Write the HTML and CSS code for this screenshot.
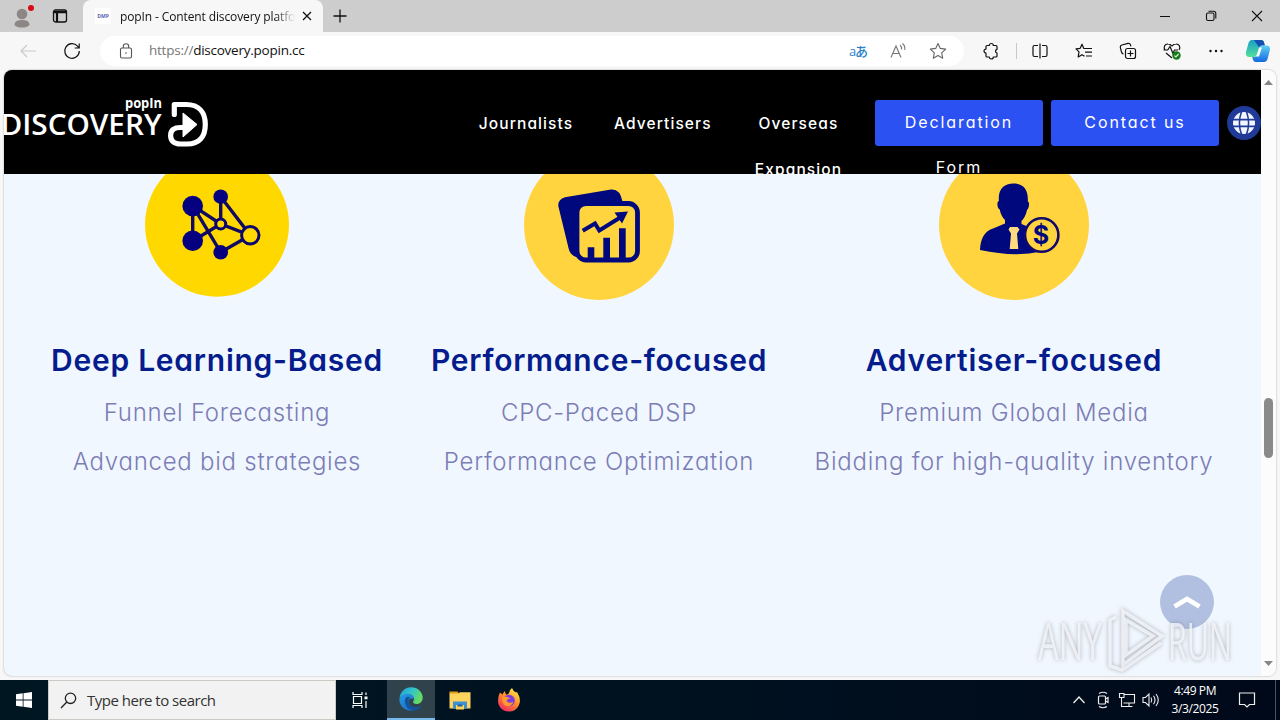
FILE: index.html
```html
<!DOCTYPE html>
<html lang="en">
<head>
  <meta charset="UTF-8">
  <meta name="viewport" content="width=device-width, initial-scale=1.0">
  <title>popIn - Content discovery platform</title>
  <link rel="stylesheet" href="styles.css">
</head>
<body>

<!-- Tabs -->
<div class="tab-bar">
  <div class="tab-tools">
    <svg class="profile" width="28" height="28" viewBox="0 0 28 28">
      <circle cx="14" cy="11" r="5.3" fill="#8c8785"/>
      <path d="M6.500 22c0-4 3.500-5 7.500-5s7.500 1 7.500 5c-2 2-4.500 2.500-7.500 2.500s-6-.5-7.500-2.500z" fill="#8c8785"/>
      <circle cx="23" cy="5" r="3" fill="#d60c12"/>
    </svg>
    <svg width="16" height="16" viewBox="0 0 16 16" fill="none" stroke="#111" stroke-width="1.300">
      <rect x="1.500" y="2" width="13" height="12" rx="2"/>
      <path d="M2 4.200h12M5 4v10" stroke-width="2.200"/>
    </svg>
  </div>
  <div class="tab">
    <span class="favicon">DMP</span>
    <span class="tab-title">popIn - Content discovery platform</span>
    <svg width="10" height="10" viewBox="0 0 10 10" stroke="#111" stroke-width="1.300"><path d="M1 1l8 8M9 1l-8 8"/></svg>
  </div>
  <svg class="new-tab" width="14" height="14" viewBox="0 0 14 14" stroke="#111" stroke-width="1.300"><path d="M7 .5v13M.5 7h13"/></svg>
  <div class="window-buttons">
    <svg width="12" height="12" viewBox="0 0 12 12" stroke="#111"><path d="M1 6.500h10"/></svg>
    <svg width="12" height="12" viewBox="0 0 12 12" fill="none" stroke="#111" stroke-width="1.100"><rect x="1.500" y="3" width="7.500" height="7.500" rx="1.500"/><path d="M3.500 1.300h5q2.300 0 2.300 2.300v5"/></svg>
    <svg width="12" height="12" viewBox="0 0 12 12" stroke="#111" stroke-width="1.100"><path d="M1 1l10 10M11 1L1 11"/></svg>
  </div>
</div>

<!-- Address bar -->
<div class="toolbar">
  <div class="tool back">
    <svg width="16" height="14" viewBox="0 0 16 14" fill="none" stroke="#c9c9c9" stroke-width="1.200"><path d="M16 7H1M7 1L1 7l6 6"/></svg>
  </div>
  <div class="tool refresh">
    <svg width="18" height="18" viewBox="0 0 18 18" fill="none" stroke="#111" stroke-width="1.200"><path d="M16.300 9A7.300 7.300 0 1 1 14.500 4.200L16 5.800M16.200 1.500v4.500h-4.500"/></svg>
  </div>
  <div class="address">
    <svg width="14" height="16" viewBox="0 0 14 16" fill="none" stroke="#555" stroke-width="1.100"><rect x="1.500" y="5" width="11" height="10" rx="1.500"/><path d="M4.300 5V3.500a2.700 2.700 0 0 1 5.400 0V5"/><circle cx="7" cy="10" r=".8" fill="#555" stroke="none"/></svg>
    <span class="url"><span class="scheme">https://</span>discovery.popin.cc</span>
    <span class="address-tool translate">aあ</span>
    <span class="address-tool">
      <svg width="18" height="18" viewBox="0 0 18 18" fill="none" stroke="#777" stroke-width="1.100"><path d="M2 15.500L7 4l5 11.500M3.800 11.500h6.400M11 3q2 1.500 1.500 4.500M13.500 1.500q3 2.500 2.200 6.500"/></svg>
    </span>
    <span class="address-tool">
      <svg width="18" height="18" viewBox="0 0 18 18" fill="none" stroke="#666" stroke-width="1.100" stroke-linejoin="round"><path d="M9 1.500l2.300 4.900 5.400.7-4 3.700 1 5.400L9 13.600l-4.700 2.600 1-5.400-4-3.700 5.400-.7z"/></svg>
    </span>
  </div>
  <div class="tool extensions">
    <svg width="18" height="18" viewBox="0 0 18 18" fill="none" stroke="#111" stroke-width="1.200" stroke-linejoin="round"><path d="M5 3.500h2.300a2 2 0 0 1 4 0H14q1 0 1 1V7.300a1.900 1.900 0 0 0 0 3.700v3q0 1-1 1h-2.700a2 2 0 0 1-4 0H5q-1 0-1-1v-2.900a2 2 0 0 1 0-4V4.500q0-1 1-1z"/></svg>
  </div>
  <div class="divider"></div>
  <div class="tool">
    <svg width="18" height="18" viewBox="0 0 18 18" fill="none" stroke="#111" stroke-width="1.200"><path d="M7 3.500H3.500q-1.500 0-1.500 1.500v8q0 1.500 1.500 1.500H7M11 3.500h3.500q1.500 0 1.500 1.500v8q0 1.500-1.500 1.500H11M9 1.500v15"/></svg>
  </div>
  <div class="tool">
    <svg width="18" height="18" viewBox="0 0 18 18" fill="none" stroke="#111" stroke-width="1.200" stroke-linejoin="round"><path d="M11 6.500H8.800L7 2.200 5.200 6.300l-4.200.6 3 3-.8 5 3.800-2.200 2.500 1.500M11 6.500h6M10 10.200h7M11 14h6"/></svg>
  </div>
  <div class="tool">
    <svg width="18" height="18" viewBox="0 0 18 18" fill="none" stroke="#111" stroke-width="1.200"><rect x="6.500" y="6.500" width="10" height="10" rx="2"/><path d="M11.500 8.500v6M8.500 11.500h6M4.500 12q-1.500-.3-2-2L1.300 5.500Q1 3.500 2.800 3L9 1.400q1.800-.4 2.400 1.200l.5 1.700"/></svg>
  </div>
  <div class="tool">
    <svg width="20" height="20" viewBox="0 0 20 20" fill="none" stroke="#111" stroke-width="1.200"><path d="M3 9C1 6 3 2.800 6 3q2.500 0 4 2 1.500-2 4-2c3-.2 5 3 3 6M1.500 9h4.200L8 5.500l3 7L12.500 9H16M4 12l6 5"/><circle cx="14.500" cy="14.500" r="4.200" fill="#167c19" stroke="none"/><path d="M12.500 14.600l1.400 1.400 2.700-3" stroke="#d9eed9"/></svg>
  </div>
  <div class="tool">
    <svg width="16" height="4" viewBox="0 0 16 4" fill="#111"><circle cx="2.500" cy="2" r="1.200"/><circle cx="8" cy="2" r="1.200"/><circle cx="13.500" cy="2" r="1.200"/></svg>
  </div>
  <div class="tool copilot">
    <svg width="26" height="24" viewBox="0 0 26 24">
      <defs>
        <linearGradient id="cp1" x1="0" y1="0" x2="0" y2="1"><stop offset="0" stop-color="#1a9fc8"/><stop offset="1" stop-color="#53df9c"/></linearGradient>
        <linearGradient id="cp2" x1="0" y1="0" x2="0" y2="1"><stop offset="0" stop-color="#5fd0f5"/><stop offset="1" stop-color="#1568df"/></linearGradient>
      </defs>
      <path d="M7 1h9q2.500 0 3.200 3l.6 2.500h-3q-2 0-2.600 2L12.300 15q-.8 3-3.600 3H4.500Q0 18 1 13L3.500 4Q4.500 1 7 1z" fill="url(#cp1)"/>
      <path d="M9 1h7q2.500 0 3.200 3l.6 2.500h-3q-2 0-2.600 2z" fill="#174fb1"/>
      <path d="M17.500 6.500h3.800q4.500 0 3.500 5L22.500 20q-.9 3-3.500 3h-8q-2.500 0-3.200-3l-.6-2h2.500q2 0 2.600-2l2-7.500q.6-2 3.200-2z" fill="url(#cp2)"/>
      <path d="M14.200 8.500h2.800l-3 9h-2.800z" fill="#f4fafe"/>
    </svg>
  </div>
</div>

<!-- Web page -->
<div class="viewport">
  <div class="page">
    <header class="header">
      <svg class="logo" width="210" height="64" viewBox="4 90 210 64">
        <text class="logo-small" x="125" y="107.500" textLength="37" lengthAdjust="spacingAndGlyphs">popIn</text>
        <text class="logo-name" x="0.500" y="134.500" textLength="161" lengthAdjust="spacingAndGlyphs">DISCOVERY</text>
        <path d="M174.300 114.500v-10h12c12.500 0 19 8 19 20s-6 19.500-18 19.500h-7c-6 0-9.700-3-9.700-8.500s4-8 9.700-8h5" fill="none" stroke="#fff" stroke-width="5.200" stroke-linecap="round" stroke-linejoin="round"/>
        <path d="M183 113l14 11.500-14 12.500z" fill="#fff" stroke="#fff" stroke-linejoin="round"/>
      </svg>
      <nav class="nav">
        <a class="nav-item">Journalists</a>
        <a class="nav-item">Advertisers</a>
        <a class="nav-item">Overseas Expansion</a>
      </nav>
      <a class="nav-button">Declaration Form</a>
      <a class="nav-button contact">Contact us</a>
      <div class="language">
        <svg width="22" height="22" viewBox="0 0 24 24"><circle cx="12" cy="12" r="12" fill="#f3f6ff"/><path d="M0 8.300h24M0 15.700h24M9.500-1Q4.500 12 9.500 25M14.500-1q5 13 0 26" fill="none" stroke="#1f3b97" stroke-width="1.700"/></svg>
      </div>
    </header>

    <section class="features">
      <div class="feature">
        <svg class="feature-icon" width="150" height="150" viewBox="0 0 150 150">
          <circle cx="75" cy="74.700" r="72" fill="#ffd800"/>
          <g fill="none" stroke="#100a62" stroke-width="3.400">
            <path d="M50.700 55.700V91l28-17zM50.700 55.700l28 46.600 29.600-17-29.600-11.300M78.700 46.700V74M78.700 46.700l29.600 38.600"/>
          </g>
          <g fill="#04007f">
            <circle cx="50.700" cy="56" r="10.300"/><circle cx="50.700" cy="90.700" r="10.300"/>
            <circle cx="78.700" cy="46.700" r="7.300"/><circle cx="78.700" cy="102.300" r="7.300"/>
          </g>
          <g fill="#ffd800" stroke="#0a0671" stroke-width="3">
            <circle cx="78.700" cy="74" r="5"/><circle cx="108.300" cy="85.300" r="8.700"/>
          </g>
        </svg>
        <h2>Deep Learning-Based</h2>
        <p>Funnel Forecasting</p>
        <p>Advanced bid strategies</p>
      </div>
      <div class="feature">
        <svg class="feature-icon" width="150" height="150" viewBox="0 0 150 150">
          <circle cx="75" cy="75" r="75" fill="#ffd43e"/>
          <path d="M34.300 56Q34 49 41 47.200L87 39.500q9-1 11.500 12V60H60v47h-8q-6-2-7.500-9z" fill="#00087d"/>
          <rect x="53" y="53.500" width="60.500" height="56.500" rx="9" fill="#ffd43e" stroke="#00087d" stroke-width="4.800"/>
          <path d="M63.700 97.300h6.600V110h-6.600zM79.300 87.700H86V110h-6.700zM95 78.300h6.700V110H95z" fill="#00087d"/>
          <path d="M58.700 80.700L71 73.500l4.300 7L97 67" fill="none" stroke="#00087d" stroke-width="4"/>
          <path d="M104 61.500l-13.500 1 7.500 11z" fill="#00087d"/>
        </svg>
        <h2>Performance-focused</h2>
        <p>CPC-Paced DSP</p>
        <p>Performance Optimization</p>
      </div>
      <div class="feature">
        <svg class="feature-icon" width="150" height="150" viewBox="0 0 150 150">
          <circle cx="75" cy="75" r="75" fill="#ffd43e"/>
          <path d="M74.500 33.500c10 0 15 6 14.300 18 2 0 1.500 7-.8 8.500-1 5-3 8.500-5.500 11v3l12 5 8 22.500q-27 6-61.500-1.500c.500-11 4-18.500 13-21.500l12-5v-3.500c-2.500-2.500-4.500-6-5.300-10.500-2.600-1-3.200-8-.8-8.500-1-11.500 4.600-17.500 14.600-17.500z" fill="#00087d"/>
          <path d="M71 77h7.500l2 2.500-2.500 4 1.300 15.500h-8.600L72 83.500l-2.500-4z" fill="#ffd980"/>
          <circle cx="102.700" cy="85" r="16.700" fill="#ffd43e" stroke="#11096b" stroke-width="2.600"/>
          <text class="dollar" x="102" y="94" text-anchor="middle">$</text>
        </svg>
        <h2>Advertiser-focused</h2>
        <p>Premium Global Media</p>
        <p>Bidding for high-quality inventory</p>
      </div>
    </section>

    <div class="to-top">
      <svg width="28" height="14" viewBox="0 0 28 14" fill="none" stroke="#fff" stroke-width="4.800"><path d="M1.500 11.500L14 4l12.500 7.500"/></svg>
    </div>
  </div>
  <div class="scrollbar">
    <svg width="9" height="5" viewBox="0 0 9 5"><path d="M0 5l4.500-5L9 5z" fill="#858585"/></svg>
    <div class="thumb"></div>
    <svg width="9" height="5" viewBox="0 0 9 5"><path d="M0 0h9L4.500 5z" fill="#858585"/></svg>
  </div>
</div>

<!-- Watermark over the page -->
<svg class="watermark" width="204" height="72" viewBox="1034 605 204 72">
  <g class="mark-text">
    <text x="1038" y="660" textLength="64" lengthAdjust="spacingAndGlyphs">ANY</text>
    <text x="1168" y="660" textLength="64" lengthAdjust="spacingAndGlyphs">RUN</text>
  </g>
  <g class="mark-shape">
    <path d="M1123 611l39 25-39 29z"/>
    <path d="M1126 620l27 16-27 19z"/>
    <path d="M1116 617l-6 3v46l12 4 39-27"/>
  </g>
</svg>

<!-- Taskbar -->
<div class="taskbar">
  <div class="task start">
    <svg width="16" height="16" viewBox="0 0 16 16" fill="#fff"><path d="M0 2.300L6.700 1.300v6.300H0zM7.500 1.200L16 0v7.600H7.500zM0 8.400h6.700v6.300L0 13.700zM7.500 8.400H16V16l-8.500-1.200z"/></svg>
  </div>
  <div class="search">
    <svg width="17" height="17" viewBox="0 0 17 17" fill="none" stroke="#222" stroke-width="1.300"><circle cx="10.500" cy="6.300" r="5.200"/><path d="M6.800 10L1 16"/></svg>
    <span>Type here to search</span>
  </div>
  <div class="task task-view">
    <svg width="18" height="18" viewBox="0 0 18 18" fill="none" stroke="#fff" stroke-width="1.200"><path d="M2 1v2.500h9V1M2 17v-2.500h9V17M2.500 5.500h8v7h-8zM15 1.500v2.500M15 10v7"/><path d="M13.500 5.500h3v2.800h-3z" fill="#fff" stroke="none"/></svg>
  </div>
  <div class="task active">
    <svg width="24" height="24" viewBox="0 0 24 24">
      <defs>
        <linearGradient id="edge1" x1="0" y1="0" x2="1" y2=".4"><stop offset="0" stop-color="#219ddd"/><stop offset=".55" stop-color="#32c5c8"/><stop offset="1" stop-color="#65dc61"/></linearGradient>
        <linearGradient id="edge2" x1="0" y1="0" x2="1" y2="1"><stop offset="0" stop-color="#249ce4"/><stop offset="1" stop-color="#1562b5"/></linearGradient>
      </defs>
      <path d="M.5 11C1.500 4.500 6 .3 12 .3c7 0 11.700 5 11.700 10.200 0 4-2.700 6.500-6 6.500-2.700 0-4.200-1.200-3.500-2.500 2.500-3-.2-7-4.200-7-4.500 0-8.500 2-9.500 3.500z" fill="url(#edge1)"/>
      <path d="M.4 11.500C2 8 6 6.500 10 7c3.500.4 5.500 3 4.700 5.500-1.200-1.500-3.500-1.500-4.500.5-1.500 3.500 1.800 7.300 6.300 7.300 2.500 0 4-.5 5.700-1.500C20 22 16.500 23.700 12.500 23.700 5 23.700 0 18.500.4 11.500z" fill="url(#edge2)"/>
      <path d="M7 10.500c-3 4 0 12.500 7.500 13 3-.3 6-2 7.700-4.700-4 2.500-10 1.500-12-2.300-1.200-2.500-.5-5 1-6-1.300-.8-3-.9-4.200 0z" fill="#14529b"/>
    </svg>
  </div>
  <div class="task folder">
    <svg width="22" height="20" viewBox="0 0 22 20"><path d="M.5 1.500h8l2 2.500H.5z" fill="#e69b17"/><path d="M.5 3.500h9l1.500-1.200h10.500V18.500H.5z" fill="#fed45e"/><path d="M4 11.500h14v7H4z" fill="#3c91d5"/><path d="M7 15h8v4.500H7z" fill="#fed45e"/><path d="M8.500 14.500h5v2h-5z" fill="#225d94"/></svg>
  </div>
  <div class="task firefox">
    <svg width="24" height="24" viewBox="0 0 24 24">
      <defs><linearGradient id="fox" x1=".8" y1="0" x2=".2" y2="1"><stop offset="0" stop-color="#fff14a"/><stop offset=".45" stop-color="#ff9128"/><stop offset="1" stop-color="#f32267"/></linearGradient></defs>
      <path d="M3 4.500l2.500 2L7.500 3l1.500 3.500q2 .3 3-1.500.3-3 3-5 1 3 4 4.500L20 4q5 8 1.500 14-3 5.500-9.500 5.500C5 23.500 1 18.500 1 12.500q0-4.500 2-8z" fill="url(#fox)"/>
      <circle cx="12" cy="12.500" r="5.800" fill="#7b3de0"/>
      <path d="M5 9q4-1.500 8.500 1.500-3.500 0-4 2.500 2 3 7 1-2.500 5-7 4Q5 17 5 9z" fill="#ff9a2b"/>
    </svg>
  </div>
  <div class="tray">
    <svg width="24" height="18" viewBox="0 0 24 18" fill="none" stroke="#eee" stroke-width="1.300"><path d="M6.500 12l5.500-6 5.500 6"/></svg>
    <svg width="24" height="18" viewBox="0 0 24 18" fill="none" stroke="#eee" stroke-width="1.200"><rect x="7.500" y="5" width="7" height="8" rx="1"/><path d="M14.500 8l2.500-1.500v5L14.500 10M8 2.500q4-2.500 8 0M8 15.500q4 2.500 8 0"/></svg>
    <svg width="24" height="18" viewBox="0 0 24 18" fill="none" stroke="#eee" stroke-width="1.100"><path d="M9 3.500h10.500v8.500H8.500M14 12v3.500M9.500 15.500h8M4.500 2.500h4.500v4h-4.500zM6.500 6.500v9h3"/></svg>
    <svg width="24" height="18" viewBox="0 0 24 18" fill="none" stroke="#eee" stroke-width="1.100"><path d="M4 6.500h2.500L10 3v12l-3.500-3.500H4zM12 6.500q1.500 2.500 0 5M14.500 4.700q3 4.300 0 8.600M17 3q4.500 6 0 12"/></svg>
    <div class="clock">
      <span>4:49 PM</span>
      <span>3/3/2025</span>
    </div>
    <svg class="notifications" width="18" height="18" viewBox="0 0 18 18" fill="none" stroke="#eee" stroke-width="1.200"><path d="M1.500 2h15v11.500h-5L9 16l-2.500-2.500h-5z"/></svg>
  </div>
</div>

</body>
</html>
```
FILE: styles.css
```css
* {
  box-sizing: border-box;
}
body {
  display: flex;
  flex-direction: column;
  width: 1280px;
  height: 720px;
  margin: 0;
  overflow: hidden;
  background-color: #f7f7f7;
  font-family: "Open Sans", "Noto Sans", sans-serif;
  color: #111;
}
svg {
  flex-shrink: 0;
}

/* Tabs */
.tab-bar {
  display: flex;
  align-items: center;
  height: 32px;
  background-color: #cdcdcd;
}
.tab-tools {
  display: flex;
  align-items: center;
  gap: 16px;
  width: 83px;
  padding-left: 8px;
}
.profile {
  margin-top: 2px;
}
.tab {
  display: flex;
  align-items: center;
  width: 240px;
  height: 32px;
  padding: 0 10px 0 12px;
  background-color: #f7f7f7;
  border-radius: 8px 8px 0 0;
}
.favicon {
  width: 16px;
  height: 16px;
  background-color: #fff;
  color: #5a62b0;
  font-size: 5px;
  font-weight: bold;
  line-height: 16px;
  text-align: center;
}
.tab-title {
  width: 175px;
  margin: 0 7px 0 9px;
  overflow: hidden;
  white-space: nowrap;
  font-size: 12px;
  letter-spacing: -0.120px;
  -webkit-mask-image: linear-gradient(to right, #000 155px, transparent 175px);
  mask-image: linear-gradient(to right, #000 155px, transparent 175px);
}
.new-tab {
  margin-left: 10px;
}
.window-buttons {
  display: flex;
  gap: 34px;
  margin-left: auto;
  padding-right: 17px;
}

/* Address bar */
.toolbar {
  display: flex;
  align-items: center;
  height: 38px;
}
.tool {
  display: flex;
  align-items: center;
  justify-content: center;
  width: 44px;
}
.back {
  width: 56px;
}
.refresh {
  width: 32px;
}
.address {
  display: flex;
  align-items: center;
  width: 864px;
  height: 30px;
  margin-left: 12px;
  padding: 0 6px 0 19px;
  background-color: #fff;
  border-radius: 15px;
}
.url {
  margin-right: auto;
  padding: 0 0 2px 16px;
  font-size: 13.500px;
  letter-spacing: -0.240px;
}
.scheme {
  color: #767676;
}
.address-tool {
  display: flex;
  justify-content: center;
  width: 40px;
}
.translate {
  color: #2b7fc7;
  font-family: "Open Sans", "Noto Sans CJK JP", sans-serif;
  font-size: 13px;
  font-weight: 500;
  line-height: 18px;
  letter-spacing: -1px;
}
.extensions {
  width: 52px;
  padding-left: 2px;
}
.divider {
  width: 1px;
  height: 16px;
  background-color: #c8c8c8;
  margin-right: 1px;
}
.copilot {
  width: 40px;
}

/* Page frame */
.viewport {
  display: flex;
  height: 606px;
  margin: 0 4px 4px;
  overflow: hidden;
  border-radius: 8px;
  background-color: #f1f7ff;
  box-shadow: 0 0 2px rgba(0, 0, 0, 0.35);
}
.page {
  position: relative;
  width: 1257px;
  font-family: Inter, "Open Sans", sans-serif;
  font-feature-settings: "cv11";
}
.header {
  position: relative;
  z-index: 1;
  display: flex;
  align-items: flex-start;
  height: 104px;
  padding-top: 30px;
  overflow: hidden;
  background-color: #000;
  color: #fff;
  font-size: 16px;
  line-height: 46px;
  text-align: center;
}
.logo {
  margin-top: -10px;
}
.logo text {
  fill: #fff;
  font-family: "Open Sans", sans-serif;
}
.logo-name {
  font-size: 29px;
  font-weight: 600;
}
.logo-small {
  font-size: 14px;
  font-weight: 700;
}
.nav {
  display: flex;
  margin-left: 244px;
}
.nav-item {
  width: 136px;
  padding: 1px 20px 0;
  font-size: 15.500px;
  font-weight: 500;
  letter-spacing: 1.100px;
}
.nav-item:last-child {
  padding: 1px 0 0 1px;
  width: 136px;
  word-spacing: 60px;
}
.nav-button {
  width: 168px;
  height: 46px;
  margin-left: 9px;
  padding: 0 24px;
  background-color: #2b51f2;
  border-radius: 3px;
  line-height: 45px;
  letter-spacing: 1.900px;
}
.contact {
  margin-left: 8px;
}
.language {
  display: flex;
  align-items: center;
  justify-content: center;
  width: 34px;
  height: 34px;
  margin: 6px 0 0 8px;
  background-color: #1f3b97;
  border-radius: 50%;
}

/* Features */
.features {
  display: grid;
  grid-template-columns: 426px 338px 492px;
  margin-top: -24px;
}
.feature {
  text-align: center;
  white-space: nowrap;
}
.feature-icon {
  display: block;
  margin: 0 auto;
}
.feature h2 {
  margin: 38px 0 5px;
  color: #041c8c;
  font-size: 30px;
  font-weight: 600;
  line-height: 45px;
  letter-spacing: 0.750px;
}
.feature p {
  margin: 0;
  color: #7b7db5;
  font-size: 24px;
  font-weight: 300;
  line-height: 49px;
  letter-spacing: 0.750px;
}
.dollar {
  fill: #00087d;
  font-size: 25px;
  font-weight: 700;
}
.to-top {
  position: absolute;
  right: 47px;
  bottom: 47px;
  display: flex;
  align-items: center;
  justify-content: center;
  width: 54px;
  height: 54px;
  background-color: #b1c0e1;
  border-radius: 50%;
}

/* Scrollbar */
.scrollbar {
  display: flex;
  flex-direction: column;
  align-items: center;
  width: 15px;
  padding: 10px 0;
  background-color: #fcfcfc;
}
.thumb {
  width: 9px;
  height: 60px;
  margin: 313px 0 auto;
  background-color: #8a8a8a;
  border-radius: 5px;
}

/* Watermark */
.watermark {
  position: absolute;
  left: 1034px;
  top: 605px;
  z-index: 2;
  filter: drop-shadow(0 0 2px rgba(100, 100, 110, 0.6));
}
.mark-text {
  fill: rgba(245, 247, 252, 0.8);
  font-family: "Open Sans", sans-serif;
  font-size: 51px;
  font-weight: 500;
}
.mark-shape {
  fill: none;
  stroke: rgba(245, 247, 252, 0.8);
  stroke-width: 3.500px;
}

/* Taskbar */
.taskbar {
  display: flex;
  height: 40px;
  background: linear-gradient(to right, #001722, #00101f 60%, #000919);
}
.task {
  display: flex;
  align-items: center;
  justify-content: center;
  width: 48px;
}
.search {
  display: flex;
  align-items: center;
  gap: 10px;
  width: 288px;
  padding-left: 11px;
  background-color: #f2f2f2;
  border: 1px solid #c9cbc5;
  color: #333;
  font-size: 15px;
  letter-spacing: -0.500px;
}
.task-view {
  width: 51px;
  padding-right: 3px;
}
.active {
  background-color: #30434d;
  border-bottom: 2px solid #76b9ed;
}
.folder {
  margin-left: 1px;
}
.firefox {
  margin-left: 1px;
}
.tray {
  display: flex;
  align-items: center;
  width: 209px;
  margin: 0 4px 0 auto;
  border-right: 1px solid #4b535c;
}
.clock {
  display: flex;
  flex-direction: column;
  width: 64px;
  color: #fff;
  font-size: 12px;
  line-height: 18px;
  letter-spacing: -0.400px;
  text-align: center;
}
.notifications {
  margin-left: 11px;
}
```
